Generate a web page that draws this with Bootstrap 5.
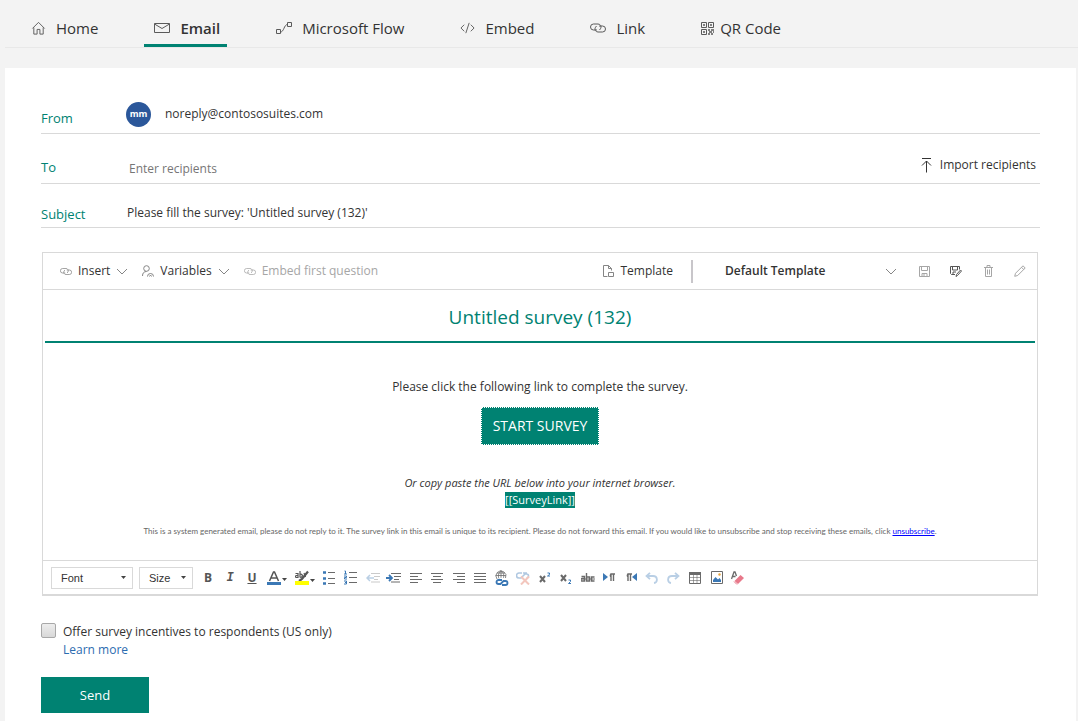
<!DOCTYPE html>
<html lang="en">
<head>
<meta charset="utf-8">
<meta name="viewport" content="width=device-width, initial-scale=1">
<title>Send survey by email</title>
<link href="https://cdn.jsdelivr.net/npm/bootstrap@5.3.0/dist/css/bootstrap.min.css" rel="stylesheet">
<style>
:root { --brand: #008272; --rule: #d9d9d9; --ink: #333; }
body { background: #f3f3f3; color: var(--ink); font: 12px/18px "Open Sans", "Noto Sans", sans-serif; }
svg { display: block; flex: none; fill: none; stroke: currentColor; }
button, input, select { font: inherit; color: inherit; }
.share-tabs { margin: 0 0 20px 5px; padding-left: 16px; gap: 39px; border-bottom: 1px solid #e8e8e8; }
.share-tabs .nav-link { display: flex; align-items: center; gap: 10px; padding: 17px 7px 5px 10px; border-bottom: 3px solid transparent; font-size: 15px; line-height: 22px; color: var(--ink); }
.share-tabs .nav-link.active { border-color: var(--brand); font-weight: 600; }
.share-tabs .tight { gap: 6px; }
.share-tabs svg { color: #5a5a5a; }
.sheet { background: #fff; margin: 0 2px 0 5px; padding: 0 36px 9px; }
.field { border-bottom: 1px solid var(--rule); }
.field-from { padding: 33px 0 6px; }
.field-to { padding: 22px 0 5px; }
.field-subject { padding: 20px 0 3px; }
.field-name { width: 86px; font-size: 13px; color: var(--brand); }
.field-from .field-name { width: 85px; margin-top: 8px; }
.field input { border: 0; outline: 0; padding: 0; background: none; }
.field-to input { padding-left: 2px; }
.field-subject input { margin-bottom: 2px; }
.field input::placeholder { color: #767676; opacity: 1; }
.avatar { width: 25px; height: 25px; margin-right: 14px; border-radius: 50%; background: #2b579a; color: #fff; font-size: 9px; font-weight: 700; }
.plain { border: 0; background: none; padding: 0; display: flex; align-items: center; }
.editor { margin: 24px 2px 27px 1px; border: 1px solid var(--rule); border-bottom-width: 2px; }
.editor-top { min-height: 37px; border-bottom: 1px solid var(--rule); padding: 0 1px 0 17px; }
.editor-top svg { color: #858585; }
.editor-top .off, .editor-top .off svg { color: #a6a6a6; }
.menu-tool { gap: 6px; margin-right: 14px; }
.tool { width: 32px; justify-content: center; }
.divider { width: 2px; height: 23px; background: #c8c6ca; margin: 0 32px 0 18px; }
.picker { appearance: none; border: 0; background: no-repeat right center; padding: 0; color: var(--ink); }
.template-picker { width: 172px; font-weight: 600; margin-right: 11px; background-image: url("data:image/svg+xml,%3Csvg xmlns='http://www.w3.org/2000/svg' width='12' height='7'%3E%3Cpath d='M1 1l5 5 5-5' fill='none' stroke='%23858585'/%3E%3C/svg%3E"); }
.format-picker { border: 1px solid var(--rule); height: 22px; padding: 0 9px; font: 11px/18px "Liberation Sans", Arial, sans-serif; background-position: right 6px center; background-image: url("data:image/svg+xml,%3Csvg xmlns='http://www.w3.org/2000/svg' width='5' height='3'%3E%3Cpath d='M0 0h5L2.5 3z' fill='%23444'/%3E%3C/svg%3E"); }
.pick-font { width: 82px; margin-right: 6px; }
.pick-size { width: 54px; margin-right: 4px; }
.mail { padding: 0 2px 23px; }
.mail h1 { margin: 0 0 35px; padding: 14px 0 11px; font-size: 19px; line-height: 26px; font-weight: 400; color: var(--brand); border-bottom: 2px solid var(--brand); }
.start { margin-top: 11px; padding: 9px 11px; border: 1px dotted #fff; background: var(--brand); color: #fff; font-size: 14px; line-height: 18px; }
.copy-hint { margin-top: 29px; font-size: 11px; font-style: italic; }
.link-token { font-size: 11px; line-height: 16px; }
.link-token span { background: var(--brand); color: #fff; display: inline-block; line-height: 16px; }
.fine-print { margin-top: 17px; font: 8px/12px Lato, "Open Sans", sans-serif; color: #666; }
.fine-print a { color: #00f; }
.editor-bottom { min-height: 34px; padding: 0 8px; border-top: 1px solid var(--rule); color: #555; }
.editor-bottom .plain { height: 22px; justify-content: center; }
.editor-bottom .pair svg { color: #6a6a6a; }
.w-style { width: 22px; }
.w-color { width: 28px; }
.pair { margin-right: 1px; }
.pair .plain { width: 21px; }
.incentive { appearance: none; width: 15px; height: 15px; margin: 0 7px 0 0; border: 1px solid #a8a8a8; border-radius: 2px; background: linear-gradient(#ededed, #d8d8d8); }
.incentive:checked { background: var(--brand); }
.learn { margin-left: 22px; color: #2b6cb0; text-decoration: none; }
.send { margin-top: 18px; width: 108px; height: 36px; border: 0; background: var(--brand); color: #fff; font-size: 13px; }
</style>
</head>
<body class="d-flex flex-column min-vh-100">

<svg width="0" height="0" class="position-absolute" aria-hidden="true">
  <symbol id="chain" viewBox="0 0 16 12"><path d="M7 8H3.500a3 3 0 0 1 0-6H8a3 3 0 0 1 2.500 4.700L9.500 8M9 4h3.500a3 3 0 0 1 0 6H8a3 3 0 0 1-2.500-4.700L6.500 4"/></symbol>
  <symbol id="down" viewBox="0 0 12 7"><path d="M1 1l5 5 5-5"/></symbol>
  <symbol id="disk" viewBox="0 0 11 11"><path d="M.5.5h10v10h-10zM2.500.5v4h6v-4M3 10.500v-3h5v3M5 8v2"/></symbol>
  <symbol id="caret" viewBox="0 0 5 3"><path d="M0 0h5L2.500 3z" fill="#444" stroke="none"/></symbol>
</svg>

<nav class="nav flex-nowrap share-tabs">
  <a class="nav-link" href="#"><svg width="15" height="16" viewBox="0 0 16 16"><path d="M1.500 8.500L8 2l6.500 6.500M3 7.500v7h3.500v-5h3v5H13v-7"/></svg>Home</a>
  <a class="nav-link active" aria-current="page" href="#"><svg width="16" height="16" viewBox="0 0 16 16"><path d="M.5 3.500h15v9H.5zM.5 4l7.500 4.500L15.500 4"/></svg>Email</a>
  <a class="nav-link" href="#"><svg width="16" height="16" viewBox="0 0 16 16"><path d="M.5 9.500h4v4h-4zM11.500 2.500h4v4h-4zM4.500 12c3.500 0 3.500-7.500 7-7.500"/></svg>Microsoft Flow</a>
  <a class="nav-link" href="#"><svg width="15" height="16" viewBox="0 0 16 16"><path d="M4.500 4.500L1 8l3.500 3.500M11.500 4.500L15 8l-3.500 3.500M9.800 2.500l-3.600 11"/></svg>Embed</a>
  <a class="nav-link" href="#"><svg width="16" height="12"><use href="#chain"/></svg>Link</a>
  <a class="nav-link tight" href="#"><svg width="13" height="13" viewBox="0 0 13 13"><path d="M.5.5h5v5h-5zM7.500.5h5v5h-5zM.5 7.500h5v5h-5z"/><path d="M2 3h2M9 3h2M2 10h2M7 8h2M10 8h3M8 10h3M7 12h2M10 12h2M12 10h1" stroke-width="1.500"/></svg>QR Code</a>
</nav>

<main class="sheet flex-grow-1">
  <div class="field field-from d-flex align-items-center">
    <div class="field-name">From</div>
    <div class="avatar d-flex align-items-center justify-content-center">mm</div>
    <div>noreply@contososuites.com</div>
  </div>
  <div class="field field-to d-flex align-items-center">
    <label class="field-name" for="to">To</label>
    <input class="flex-grow-1 align-self-end" id="to" type="text" placeholder="Enter recipients">
    <button type="button" class="plain gap-2 me-1 mb-1"><svg width="11" height="15" viewBox="0 0 11 15"><path d="M1 .5h9M5.500 14.500V3M1 7.500L5.500 3 10 7.500"/></svg>Import recipients</button>
  </div>
  <div class="field field-subject d-flex align-items-center">
    <label class="field-name" for="subject">Subject</label>
    <input class="flex-grow-1" id="subject" type="text" value="Please fill the survey: 'Untitled survey (132)'">
  </div>

  <section class="editor">
    <div class="editor-top d-flex align-items-stretch">
      <button type="button" class="plain menu-tool"><svg width="12" height="9"><use href="#chain"/></svg>Insert<svg width="12" height="7"><use href="#down"/></svg></button>
      <button type="button" class="plain menu-tool"><svg width="12" height="12" viewBox="0 0 12 12"><circle cx="4.500" cy="3.500" r="2.800"/><path d="M.5 11c0-3 1.500-4.500 4-4.500M5.500 11.500a3 3 0 0 1 6 0M7.500 11.500l1-1.500 1 1.500"/></svg>Variables<svg width="12" height="7"><use href="#down"/></svg></button>
      <button type="button" class="plain menu-tool off"><svg width="12" height="9"><use href="#chain"/></svg>Embed first question</button>
      <button type="button" class="plain menu-tool ms-auto me-0"><svg width="11" height="12" viewBox="0 0 11 12"><path d="M4.500 11.500h-4V.5h5l3 3v2M5.500.5v3h3M5.500 7.500h5v4h-5z"/></svg>Template</button>
      <div class="divider align-self-center"></div>
      <select class="picker template-picker" aria-label="Template"><option>Default Template</option></select>
      <button type="button" class="plain tool off" aria-label="Save"><svg width="11" height="11"><use href="#disk"/></svg></button>
      <button type="button" class="plain tool" aria-label="Save as"><svg width="12" height="11" viewBox="0 0 12 11"><path d="M5 8.500H1.500l-1-1v-7h9v3M2.500.5v3.500h5V.5M3 8.500V6h3M6 10.500l.5-2L10.500 4l1 1-4 4.500z" stroke="#555"/></svg></button>
      <button type="button" class="plain tool off" aria-label="Delete"><svg width="9" height="12" viewBox="0 0 9 12"><path d="M0 2.500h9M3 2V.5h3V2M1.500 2.500v9h6v-9M3.500 4.500v5M5.500 4.500v5"/></svg></button>
      <button type="button" class="plain tool off" aria-label="Edit"><svg width="12" height="12" viewBox="0 0 12 12"><path d="M.7 11.300l.8-3L9 .8l2.200 2.200-7.500 7.500zM7.500 2.300l2.200 2.200"/></svg></button>
    </div>

    <div class="mail text-center">
      <h1>Untitled survey (132)</h1>
      <div>Please click the following link to complete the survey.</div>
      <button type="button" class="start">START SURVEY</button>
      <div class="copy-hint">Or copy paste the URL below into your internet browser.</div>
      <div class="link-token"><span>[[SurveyLink]]</span></div>
      <div class="fine-print">This is a system generated email, please do not reply to it. The survey link in this email is unique to its recipient. Please do not forward this email. If you would like to unsubscribe and stop receiving these emails, click <a href="#">unsubscribe</a>.</div>
    </div>

    <div class="editor-bottom d-flex align-items-center">
      <select class="picker format-picker pick-font" aria-label="Font"><option>Font</option></select>
      <select class="picker format-picker pick-size" aria-label="Size"><option>Size</option></select>
      <button type="button" class="plain w-style fw-bold" aria-label="Bold">B</button>
      <button type="button" class="plain w-style fw-bold fst-italic" aria-label="Italic"><span class="font-monospace">I</span></button>
      <button type="button" class="plain w-style fw-bold text-decoration-underline" aria-label="Underline">U</button>
      <button type="button" class="plain w-color" aria-label="Text colour"><svg width="20" height="14" viewBox="0 0 20 14"><path d="M2.500 10L6.500 1h1l4 9M4 7h6" stroke-width="1.500"/><path d="M0 12.500h14" stroke="#3b78b5" stroke-width="3"/><use href="#caret" x="15" y="7" width="5" height="3"/></svg></button>
      <button type="button" class="plain w-color" aria-label="Highlight colour"><svg width="20" height="16" viewBox="0 0 20 16"><g stroke-width="1.200"><path d="M.5 3.500h2.500v4H1.500a1 1 0 0 1 0-2H3M5 1v6.500M5 4.500a1.500 1.500 0 1 1 0 2.500M9 3l1.500 4"/></g><path d="M13 1.500L7 9l-3 2" stroke-width="2.200"/><path d="M0 13h14" stroke="#ff0" stroke-width="4"/><use href="#caret" x="15" y="9" width="5" height="3"/></svg></button>
      <div class="pair d-flex">
        <button type="button" class="plain" aria-label="Bulleted list"><svg width="13" height="14" viewBox="0 0 13 14"><path d="M5 1.500h7M5 7.500h7M5 12.500h7"/><path d="M0 1.500h3M0 7.500h3M0 12.500h3" stroke="#3b78b5" stroke-width="2.500"/></svg></button>
        <button type="button" class="plain" aria-label="Numbered list"><svg width="13" height="15" viewBox="0 0 13 15"><path d="M5 2.500h8M5 7.500h8M5 12.500h8"/><path d="M.5 1h1v3M0 4h3M0 6h2.500v1.500H.5V9H3M0 11h2.500v3H0M1 12.500h1" stroke="#3b78b5"/></svg></button>
      </div>
      <div class="pair d-flex">
        <button type="button" class="plain" aria-label="Outdent"><svg width="14" height="11" viewBox="0 0 14 11" opacity=".35"><path d="M5 1.500h9M8 4.500h6M8 7.500h4M5 10h9"/><path d="M8 6H1M4 3L1 6l3 3" stroke="#3b78b5" stroke-width="1.500"/></svg></button>
        <button type="button" class="plain" aria-label="Indent"><svg width="15" height="11" viewBox="0 0 15 11"><path d="M5 1.500h10M8 4.500h7M8 7.500h5M5 10h9"/><path d="M0 6h6M3 3l3 3-3 3" stroke="#3b78b5" stroke-width="1.800"/></svg></button>
      </div>
      <div class="pair d-flex">
        <button type="button" class="plain" aria-label="Align left"><svg width="12" height="10" viewBox="0 0 12 10"><path d="M0 .5h12M0 3.500h8M0 6.500h12M0 9.500h8"/></svg></button>
        <button type="button" class="plain" aria-label="Align centre"><svg width="12" height="10" viewBox="0 0 12 10"><path d="M0 .5h12M2 3.500h8M0 6.500h12M2 9.500h8"/></svg></button>
      </div>
      <div class="pair d-flex">
        <button type="button" class="plain" aria-label="Align right"><svg width="12" height="10" viewBox="0 0 12 10"><path d="M0 .5h12M4 3.500h8M0 6.500h12M4 9.500h8"/></svg></button>
        <button type="button" class="plain" aria-label="Justify"><svg width="12" height="10" viewBox="0 0 12 10"><path d="M0 .5h12M0 3.500h12M0 6.500h12M0 9.500h12"/></svg></button>
      </div>
      <div class="pair d-flex">
        <button type="button" class="plain" aria-label="Insert link"><svg width="14" height="16" viewBox="0 0 14 16"><path d="M2 9A5 5 0 1 1 10.500 8M.8 5.500h10M6 .8v7M6 .8C3 3 3 7 4 8.500M6 .8c3 2 3 5 2.500 7M2 3h8" stroke-width=".8"/><path d="M7 10H3.500a2 2 0 0 0 0 4h2L8.500 11h2a2 2 0 0 1 0 4H7" stroke="#3b78b5" stroke-width="1.800"/></svg></button>
        <button type="button" class="plain" aria-label="Remove link"><svg width="14" height="14" viewBox="0 0 14 14" opacity=".4"><path d="M6 2H3a2 2 0 0 0 0 5h2l4-4h1.500a2 2 0 0 1 0 4M7 2h4" stroke="#3b78b5" stroke-width="1.600"/><path d="M5 5.500l8 8M13 5.500l-8 8" stroke="#e2725b" stroke-width="2"/></svg></button>
      </div>
      <div class="pair d-flex">
        <button type="button" class="plain" aria-label="Superscript"><svg width="12" height="12" viewBox="0 0 12 12"><path d="M1 4l5 6M6 4l-5 6" stroke-width="2"/><path d="M8.500 1h2v1.500L8.500 4H11" stroke="#3b78b5"/></svg></button>
        <button type="button" class="plain" aria-label="Subscript"><svg width="12" height="12" viewBox="0 0 12 12"><path d="M1 3l5 6M6 3l-5 6" stroke-width="2"/><path d="M8.500 8h2v1.500L8.500 11.500H11" stroke="#3b78b5"/></svg></button>
      </div>
      <div class="pair d-flex">
        <button type="button" class="plain" aria-label="Strikethrough"><svg width="14" height="10" viewBox="0 0 14 10"><path d="M.5 3.500h3V8H1a1 1 0 0 1 0-2.500h2.500M5.500 0v8h3V4h-3M13.500 4h-3v4h3" stroke-width="1.400"/><path d="M0 6h14"/></svg></button>
        <button type="button" class="plain" aria-label="Left to right"><svg width="12" height="9" viewBox="0 0 12 9"><path d="M0 0v8l5-4z" fill="#3b78b5" stroke="none"/><path d="M8 8V1h4M10.500 1v7M8 1a2 2 0 0 0 0 3" stroke-width="1.400"/></svg></button>
      </div>
      <div class="pair d-flex">
        <button type="button" class="plain" aria-label="Right to left"><svg width="12" height="9" viewBox="0 0 12 9"><path d="M12 0v8L7 4z" fill="#3b78b5" stroke="none"/><path d="M3 8V1h4M5.500 1v7M3 1a2 2 0 0 0 0 3" stroke-width="1.400"/></svg></button>
        <button type="button" class="plain" aria-label="Undo"><svg width="13" height="12" viewBox="0 0 13 12"><path d="M5 .8L1.500 4 5 7.200M1.500 4H8c5 0 5 6.500 1 7" stroke="#b9cfe5" stroke-width="1.800"/></svg></button>
      </div>
      <div class="pair d-flex">
        <button type="button" class="plain" aria-label="Redo"><svg width="13" height="12" viewBox="0 0 13 12"><path d="M8 .8L11.500 4 8 7.200M11.500 4H5C0 4 0 10.500 4 11" stroke="#b9cfe5" stroke-width="1.800"/></svg></button>
        <button type="button" class="plain" aria-label="Insert table"><svg width="12" height="12" viewBox="0 0 12 12"><path d="M0 1.500h12" stroke-width="3"/><path d="M.5.5h11v11H.5z"/><path d="M4.500 3v8M8 3v8M1 5.500h10M1 8.500h10" opacity=".6"/></svg></button>
      </div>
      <div class="pair d-flex">
        <button type="button" class="plain" aria-label="Insert image"><svg width="12" height="13" viewBox="0 0 12 13"><path d="M.5.5h11v12H.5z"/><path d="M2 11V9l2.500-3L7 8.500 8.500 7 10 9v2z" fill="#3b78b5" stroke="none"/><circle cx="8.500" cy="3.500" r="1.200" fill="#e8a33d" stroke="none"/></svg></button>
        <button type="button" class="plain" aria-label="Clear formatting"><svg width="13" height="14" viewBox="0 0 13 14"><path d="M.5 8L3 1h1l1.500 4M1.500 5.500h3" stroke-width="1.300"/><path d="M9.500 4L13 7l-6 6-3.500-3z" fill="#e8788a" stroke="none"/><path d="M3 10.500L6 13.500" stroke="#e8788a"/></svg></button>
      </div>
    </div>
  </section>

  <div class="d-flex">
    <input class="incentive" type="checkbox" id="incentive">
    <label for="incentive">Offer survey incentives to respondents (US only)</label>
  </div>
  <a class="learn d-inline-block" href="#">Learn more</a>
  <button type="button" class="send d-block">Send</button>
</main>
<script src="https://cdn.jsdelivr.net/npm/bootstrap@5.3.0/dist/js/bootstrap.bundle.min.js"></script>
</body>
</html>
